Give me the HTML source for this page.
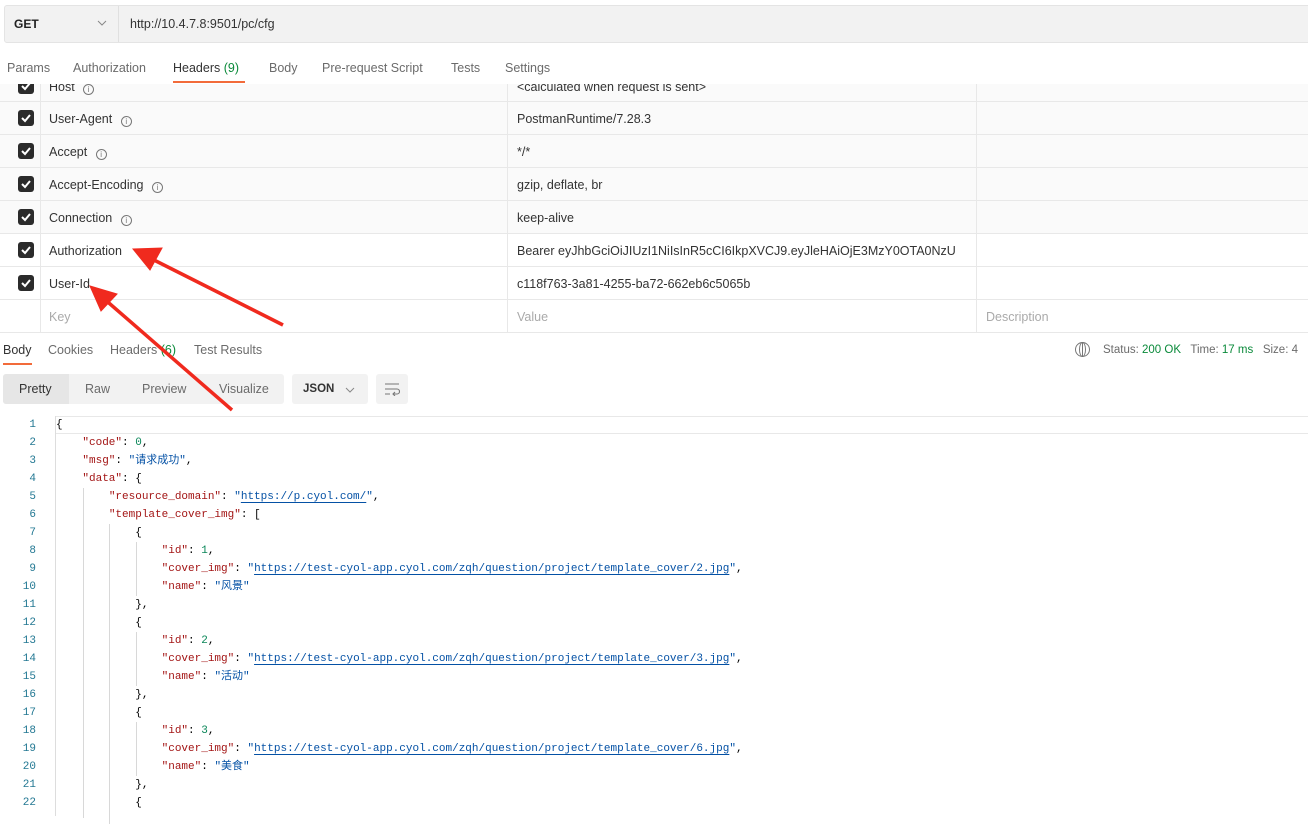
<!DOCTYPE html>
<html><head><meta charset="utf-8"><style>
*{margin:0;padding:0;box-sizing:border-box}
body{width:1308px;height:815px;overflow:hidden;background:#fff;font-family:"Liberation Sans","Noto Sans CJK SC",sans-serif;font-size:12px;color:#212121;position:relative}
.abs{position:absolute}
.urlbar{left:4px;top:5px;width:1310px;height:38px;background:#f2f2f2;border:1px solid #e4e4e4;border-radius:3px}
.tab{position:absolute;top:61px;font-size:12.5px;color:#6b6b6b}
.row{position:absolute;left:0;width:1308px;height:33px;border-bottom:1px solid #e8e8e8;background:#fafafa}
.row.w{background:#fff}
.cb{position:absolute;left:18px;top:8px;width:16px;height:16px;background:#2b2b2b;border-radius:3px}
.cb svg{position:absolute;left:2px;top:2px}
.k{position:absolute;left:49px;top:10px;font-size:12.5px;color:#333}
.v{position:absolute;left:517px;top:10px;font-size:12.5px;color:#333}
.c1{position:absolute;left:40px;top:0;height:33px;border-left:1px solid #e8e8e8}
.c2{position:absolute;left:507px;top:0;height:33px;border-left:1px solid #e8e8e8}
.c3{position:absolute;left:976px;top:0;height:33px;border-left:1px solid #e8e8e8}
.i{display:inline-block;width:11px;height:11px;border:1px solid #777;border-radius:50%;font-size:8px;line-height:9px;text-align:center;color:#777;margin-left:5px;vertical-align:-1px}
.code{position:absolute;left:0;top:416px;font-family:"Liberation Mono","Noto Sans CJK SC",monospace;font-size:11px}
.ln{position:absolute;left:0;width:36px;text-align:right;color:#237893;line-height:18px;height:18px}
.cl{position:absolute;left:56px;white-space:pre;color:#000;line-height:18px;height:18px}
.key{color:#a31515}.str{color:#0451a5}.num{color:#098658}
.u{text-decoration:underline;text-underline-offset:3px}
.guide{position:absolute;border-left:1px solid #d8d8d8}
</style></head><body>
<div class="abs urlbar"></div>
<div class="abs" style="left:118px;top:6px;height:36px;border-left:1px solid #e0e0e0"></div>
<div class="abs" style="left:14px;top:17px;font-weight:bold;font-size:12px;color:#222">GET</div>
<svg class="abs" style="left:97px;top:20px" width="10" height="6"><path d="M1 1l4 4 4-4" stroke="#888" fill="none"/></svg>
<div class="abs" style="left:130px;top:17px;font-size:12.5px;color:#333">http://10.4.7.8:9501/pc/cfg</div>

<div class="tab" style="left:7px">Params</div>
<div class="tab" style="left:73px">Authorization</div>
<div class="tab" style="left:173px;color:#333">Headers <span style="color:#0a8a3a">(9)</span></div>
<div class="abs" style="left:173px;top:81px;width:72px;height:2px;background:#f26b3a"></div>
<div class="tab" style="left:269px">Body</div>
<div class="tab" style="left:322px">Pre-request Script</div>
<div class="tab" style="left:451px">Tests</div>
<div class="tab" style="left:505px">Settings</div>

<div class="row" style="top:84px;height:18px;overflow:hidden"><div class="cb" style="top:-6px"><svg width="12" height="12"><path d="M2 6l3 3 5-6" stroke="#fff" stroke-width="2" fill="none"/></svg></div><div class="c1" style="height:18px"></div><div class="c2" style="height:18px"></div><div class="c3" style="height:18px"></div><div class="k" style="top:-4px">Host <span class="i">i</span></div><div class="v" style="top:-4px">&lt;calculated when request is sent&gt;</div></div>

<div class="row" style="top:102px"><div class="cb"><svg width="12" height="12"><path d="M2 6l3 3 5-6" stroke="#fff" stroke-width="2" fill="none"/></svg></div><div class="c1"></div><div class="c2"></div><div class="c3"></div><div class="k">User-Agent <span class="i">i</span></div><div class="v">PostmanRuntime/7.28.3</div></div>
<div class="row" style="top:135px"><div class="cb"><svg width="12" height="12"><path d="M2 6l3 3 5-6" stroke="#fff" stroke-width="2" fill="none"/></svg></div><div class="c1"></div><div class="c2"></div><div class="c3"></div><div class="k">Accept <span class="i">i</span></div><div class="v">*/*</div></div>
<div class="row" style="top:168px"><div class="cb"><svg width="12" height="12"><path d="M2 6l3 3 5-6" stroke="#fff" stroke-width="2" fill="none"/></svg></div><div class="c1"></div><div class="c2"></div><div class="c3"></div><div class="k">Accept-Encoding <span class="i">i</span></div><div class="v">gzip, deflate, br</div></div>
<div class="row" style="top:201px"><div class="cb"><svg width="12" height="12"><path d="M2 6l3 3 5-6" stroke="#fff" stroke-width="2" fill="none"/></svg></div><div class="c1"></div><div class="c2"></div><div class="c3"></div><div class="k">Connection <span class="i">i</span></div><div class="v">keep-alive</div></div>
<div class="row w" style="top:234px"><div class="cb"><svg width="12" height="12"><path d="M2 6l3 3 5-6" stroke="#fff" stroke-width="2" fill="none"/></svg></div><div class="c1"></div><div class="c2"></div><div class="c3"></div><div class="k">Authorization</div><div class="v">Bearer eyJhbGciOiJIUzI1NiIsInR5cCI6IkpXVCJ9.eyJleHAiOjE3MzY0OTA0NzU</div></div>
<div class="row w" style="top:267px"><div class="cb"><svg width="12" height="12"><path d="M2 6l3 3 5-6" stroke="#fff" stroke-width="2" fill="none"/></svg></div><div class="c1"></div><div class="c2"></div><div class="c3"></div><div class="k">User-Id</div><div class="v">c118f763-3a81-4255-ba72-662eb6c5065b</div></div>
<div class="row w" style="top:300px"><div class="c1"></div><div class="c2"></div><div class="c3"></div><div class="k" style="color:#aaa">Key</div><div class="v" style="color:#aaa">Value</div><div class="v" style="left:986px;color:#aaa">Description</div></div>

<div class="abs" style="left:3px;top:343px;font-size:12.5px;color:#333">Body</div>
<div class="abs" style="left:3px;top:363px;width:29px;height:2px;background:#f26b3a"></div>
<div class="abs" style="left:48px;top:343px;font-size:12.5px;color:#6b6b6b">Cookies</div>
<div class="abs" style="left:110px;top:343px;font-size:12.5px;color:#6b6b6b">Headers <span style="color:#0a8a3a">(6)</span></div>
<div class="abs" style="left:194px;top:343px;font-size:12.5px;color:#6b6b6b">Test Results</div>
<div class="abs" style="left:1075px;top:342px;width:15px;height:15px;border:1.5px solid #777;border-radius:50%"></div>
<div class="abs" style="left:1079px;top:342px;width:7px;height:15px;border:1.2px solid #777;border-radius:50%"></div>
<div class="abs" style="left:1082px;top:342px;height:15px;border-left:1.2px solid #777"></div>
<div class="abs" style="left:1103px;top:344px;font-size:11.5px;color:#6b6b6b">Status: <span style="color:#0a8a3a">200 OK</span> &nbsp; Time: <span style="color:#0a8a3a">17 ms</span> &nbsp; Size: 4</div>

<div class="abs" style="left:3px;top:374px;width:281px;height:30px;background:#f2f2f2;border-radius:3px"></div>
<div class="abs" style="left:3px;top:374px;width:66px;height:30px;background:#e6e6e6;border-radius:3px 0 0 3px"></div>
<div class="abs" style="left:19px;top:382px;font-size:12.5px;color:#333">Pretty</div>
<div class="abs" style="left:85px;top:382px;font-size:12.5px;color:#6b6b6b">Raw</div>
<div class="abs" style="left:142px;top:382px;font-size:12.5px;color:#6b6b6b">Preview</div>
<div class="abs" style="left:219px;top:382px;font-size:12.5px;color:#6b6b6b">Visualize</div>
<div class="abs" style="left:292px;top:374px;width:76px;height:30px;background:#f2f2f2;border-radius:3px"></div>
<div class="abs" style="left:303px;top:383px;font-size:11.5px;color:#333;font-weight:bold">JSON</div>
<svg class="abs" style="left:345px;top:387px" width="10" height="6"><path d="M1 1l4 4 4-4" stroke="#888" fill="none"/></svg>
<div class="abs" style="left:376px;top:374px;width:32px;height:30px;background:#f2f2f2;border-radius:3px"></div>
<svg class="abs" style="left:384px;top:382px" width="16" height="14"><path d="M1 2h14M1 7h12a2.5 2.5 0 010 5H9M1 12h5M11 10l-2 2 2 2" stroke="#777" stroke-width="1.1" fill="none"/></svg>

<div class="abs" style="left:55px;top:416px;width:1253px;height:18px;border:1px solid #e8e8e8;border-right:none"></div>
<div class="abs" style="left:55px;top:416px;height:400px;border-left:1px solid #ddd"></div>
<div class="code" id="c"></div>

<svg class="abs" style="left:0;top:0" width="1308" height="815">
<g fill="#f02a1e" stroke="#f02a1e">
<line x1="283" y1="325" x2="150" y2="258" stroke-width="3.5"/>
<polygon points="133,249 162,248 150,270" stroke-width="1"/>
<line x1="232" y1="410" x2="102" y2="297" stroke-width="3.5"/>
<polygon points="90,286 117,294 101,311" stroke-width="1"/>
</g></svg>
<script>
var L=[
['{'],
['    <span class=key>"code"</span>: <span class=num>0</span>,'],
['    <span class=key>"msg"</span>: <span class=str>"请求成功"</span>,'],
['    <span class=key>"data"</span>: {'],
['        <span class=key>"resource_domain"</span>: <span class=str>"<span class=u>https://p.cyol.com/</span>"</span>,'],
['        <span class=key>"template_cover_img"</span>: ['],
['            {'],
['                <span class=key>"id"</span>: <span class=num>1</span>,'],
['                <span class=key>"cover_img"</span>: <span class=str>"<span class=u>https://test-cyol-app.cyol.com/zqh/question/project/template_cover/2.jpg</span>"</span>,'],
['                <span class=key>"name"</span>: <span class=str>"风景"</span>'],
['            },'],
['            {'],
['                <span class=key>"id"</span>: <span class=num>2</span>,'],
['                <span class=key>"cover_img"</span>: <span class=str>"<span class=u>https://test-cyol-app.cyol.com/zqh/question/project/template_cover/3.jpg</span>"</span>,'],
['                <span class=key>"name"</span>: <span class=str>"活动"</span>'],
['            },'],
['            {'],
['                <span class=key>"id"</span>: <span class=num>3</span>,'],
['                <span class=key>"cover_img"</span>: <span class=str>"<span class=u>https://test-cyol-app.cyol.com/zqh/question/project/template_cover/6.jpg</span>"</span>,'],
['                <span class=key>"name"</span>: <span class=str>"美食"</span>'],
['            },'],
['            {']];
var h='';
for(var i=0;i<L.length;i++){h+='<div class=ln style="top:'+(i*18)+'px">'+(i+1)+'</div><div class=cl style="top:'+(i*18)+'px">'+L[i][0]+'</div>';}
h+='<div class=guide style="left:83px;top:72px;height:330px"></div><div class=guide style="left:109px;top:108px;height:300px"></div>';
[[7,3],[12,3],[17,3]].forEach(function(p){h+='<div class=guide style="left:136px;top:'+(p[0]*18)+'px;height:'+(p[1]*18)+'px"></div>';});
document.getElementById('c').innerHTML=h;
</script>
</body></html>
